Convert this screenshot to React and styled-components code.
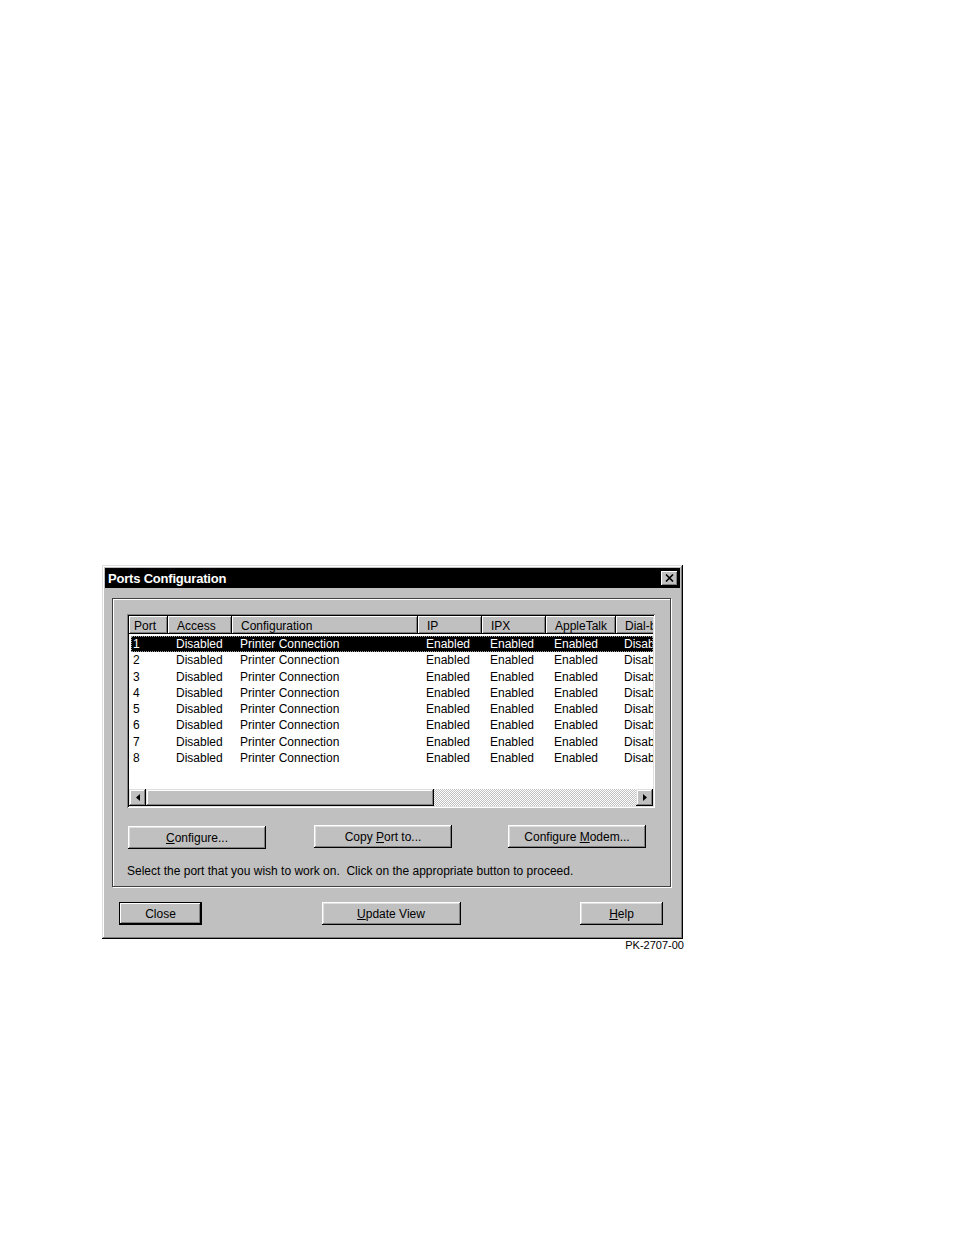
import React from 'react';
import styled, { createGlobalStyle } from 'styled-components';

const columns = [
  { key: 'port', label: 'Port', width: 39, pad: 4 },
  { key: 'access', label: 'Access', width: 64, pad: 8 },
  { key: 'config', label: 'Configuration', width: 186, pad: 8 },
  { key: 'ip', label: 'IP', width: 64, pad: 8 },
  { key: 'ipx', label: 'IPX', width: 64, pad: 8 },
  { key: 'apple', label: 'AppleTalk', width: 70, pad: 8 },
  { key: 'dial', label: 'Dial-back', width: 80, pad: 8 },
];

const rows = [1, 2, 3, 4, 5, 6, 7, 8].map((n) => ({
  port: String(n),
  access: 'Disabled',
  config: 'Printer Connection',
  ip: 'Enabled',
  ipx: 'Enabled',
  apple: 'Enabled',
  dial: 'Disabled',
}));

export default function App() {
  return (
    <Page>
      <GlobalStyle />
      <Window>
        <TitleBar>
          <Title>Ports Configuration</Title>
          <CloseBox>
            <svg width="9" height="8" viewBox="0 0 9 8">
              <path d="M1 0.5 L8 7.5 M8 0.5 L1 7.5" stroke="#000" strokeWidth="1.6" />
            </svg>
          </CloseBox>
        </TitleBar>

        <GroupBox>
          <ListView>
            <HeaderRow>
              {columns.map((c) => (
                <HeaderCell key={c.key} $w={c.width} $pad={c.pad + 1}>
                  {c.label}
                </HeaderCell>
              ))}
            </HeaderRow>
            <Rows>
              {rows.map((r, i) => (
                <Row key={i} $selected={i === 0}>
                  {columns.map((c) => (
                    <Cell key={c.key} $w={c.width} $pad={c.pad}>
                      {r[c.key]}
                    </Cell>
                  ))}
                </Row>
              ))}
            </Rows>
            <ScrollBar>
              <ArrowButton>
                <svg width="4" height="7" viewBox="0 0 4 7">
                  <path d="M4 0 L0 3.5 L4 7 Z" fill="#000" />
                </svg>
              </ArrowButton>
              <Thumb />
              <Track />
              <ArrowButton>
                <svg width="4" height="7" viewBox="0 0 4 7">
                  <path d="M0 0 L4 3.5 L0 7 Z" fill="#000" />
                </svg>
              </ArrowButton>
            </ScrollBar>
          </ListView>

          <ButtonRow>
            <Button $w={138} $top={1}>
              <span><u>C</u>onfigure...</span>
            </Button>
            <Button $w={138} $ml={48}>
              <span>Copy <u>P</u>ort to...</span>
            </Button>
            <Button $w={138} $ml={56}>
              <span>Configure <u>M</u>odem...</span>
            </Button>
          </ButtonRow>
          <Status>
            Select the port that you wish to work on.&nbsp; Click on the appropriate button to proceed.
          </Status>
        </GroupBox>

        <FooterRow>
          <Button $w={83} $default>
            <span>Close</span>
          </Button>
          <Button $w={139}>
            <span><u>U</u>pdate View</span>
          </Button>
          <Button $w={83}>
            <span><u>H</u>elp</span>
          </Button>
        </FooterRow>
      </Window>
      <Caption>PK-2707-00</Caption>
    </Page>
  );
}

const GlobalStyle = createGlobalStyle`
  html, body {
    margin: 0;
    padding: 0;
    background: #fff;
  }
  body {
    font-family: "Liberation Sans", Arial, sans-serif;
    font-size: 12px;
    color: #000;
  }
`;

const Page = styled.div`
  width: 954px;
  height: 1235px;
  box-sizing: border-box;
  padding: 565px 0 0 102px;
`;

const Window = styled.div`
  width: 581px;
  box-sizing: border-box;
  background: #c0c0c0;
  padding: 3px 3px 14px 3px;
  box-shadow: inset -1px -1px #000, inset 1px 1px #dfdfdf, inset -2px -2px #808080, inset 2px 2px #fff;
`;

const TitleBar = styled.div`
  height: 20px;
  background: #000;
  display: flex;
  align-items: center;
  justify-content: space-between;
  padding: 0 2px 0 3px;
`;

const Title = styled.span`
  color: #fff;
  font-weight: bold;
  font-size: 13px;
  letter-spacing: -0.2px;
`;

const CloseBox = styled.div`
  width: 17px;
  height: 15px;
  box-sizing: border-box;
  background: #c0c0c0;
  display: flex;
  align-items: center;
  justify-content: center;
  box-shadow: inset -1px -1px #000, inset 1px 1px #fff, inset -2px -2px #808080;
`;

const GroupBox = styled.div`
  width: 559px;
  box-sizing: border-box;
  margin: 10px 0 0 7px;
  padding: 15px 14px 7px 14px;
  border: 1px solid #404040;
  box-shadow: inset 1px 1px #fff, 1px 1px #fff;
`;

const ListView = styled.div`
  width: 528px;
  height: 194px;
  box-sizing: border-box;
  padding: 2px;
  background: #fff;
  display: flex;
  flex-direction: column;
  overflow: hidden;
  box-shadow: inset 1px 1px #808080, inset -1px -1px #fff, inset 2px 2px #000, inset -2px -2px #dfdfdf;
`;

const HeaderRow = styled.div`
  display: flex;
  height: 18px;
  flex-shrink: 0;
  background: #c0c0c0;
  overflow: hidden;
`;

const HeaderCell = styled.div`
  flex: 0 0 ${(p) => p.$w}px;
  box-sizing: border-box;
  padding: 2px 0 0 ${(p) => p.$pad}px;
  line-height: 17px;
  white-space: nowrap;
  overflow: hidden;
  box-shadow: inset -1px -1px #000, inset 1px 1px #fff, inset -2px -2px #808080;
`;

const Rows = styled.div`
  flex: 1;
  padding-top: 2px;
  overflow: hidden;
`;

const Row = styled.div`
  display: flex;
  height: 16.3px;
  line-height: 16px;
  margin-left: 2px;
  overflow: hidden;
  background: ${(p) => (p.$selected ? '#000' : 'transparent')};
  color: ${(p) => (p.$selected ? '#fff' : '#000')};
  outline: ${(p) => (p.$selected ? '1px dotted #9a9a9a' : 'none')};
  outline-offset: -1px;
`;

const Cell = styled.div`
  flex: 0 0 ${(p) => p.$w}px;
  box-sizing: border-box;
  padding-left: ${(p) => p.$pad}px;
  white-space: nowrap;
  overflow: hidden;
  &:first-child {
    flex-basis: ${(p) => p.$w - 2}px;
    padding-left: ${(p) => p.$pad - 2}px;
  }
`;

const ScrollBar = styled.div`
  display: flex;
  height: 17px;
  flex-shrink: 0;
`;

const ArrowButton = styled.div`
  flex: 0 0 17px;
  box-sizing: border-box;
  background: #c0c0c0;
  display: flex;
  align-items: center;
  justify-content: center;
  box-shadow: inset -1px -1px #000, inset 1px 1px #dfdfdf, inset -2px -2px #808080, inset 2px 2px #fff;
`;

const Thumb = styled.div`
  flex: 0 0 288px;
  background: #c0c0c0;
  box-shadow: inset -1px -1px #000, inset 1px 1px #dfdfdf, inset -2px -2px #808080, inset 2px 2px #fff;
`;

const Track = styled.div`
  flex: 1;
  background: repeating-conic-gradient(#fff 0 25%, #c0c0c0 0 50%) 0 0 / 2px 2px;
`;

const ButtonRow = styled.div`
  display: flex;
  align-items: flex-start;
  margin-top: 17px;
  padding-left: 1px;
`;

const Button = styled.div`
  width: ${(p) => p.$w}px;
  height: 23px;
  box-sizing: border-box;
  margin-left: ${(p) => p.$ml || 0}px;
  margin-top: ${(p) => p.$top || 0}px;
  background: #c0c0c0;
  display: flex;
  align-items: center;
  justify-content: center;
  font-size: 12px;
  white-space: pre;
  box-shadow: ${(p) =>
    p.$default
      ? 'inset 0 0 0 1px #000, inset -2px -2px #000, inset 2px 2px #fff, inset -3px -3px #808080'
      : 'inset -1px -1px #000, inset 1px 1px #fff, inset -2px -2px #808080, inset 2px 2px #dfdfdf'};

  u {
    text-decoration: underline;
    text-underline-offset: 1px;
  }
`;

const Status = styled.div`
  margin-top: 14px;
  line-height: 16px;
  white-space: nowrap;
`;

const FooterRow = styled.div`
  display: flex;
  justify-content: space-between;
  margin-top: 15px;
  padding: 0 17px 0 14px;
`;

const Caption = styled.div`
  width: 582px;
  text-align: right;
  font-size: 11px;
  line-height: 12px;
  margin-top: 0px;
`;
